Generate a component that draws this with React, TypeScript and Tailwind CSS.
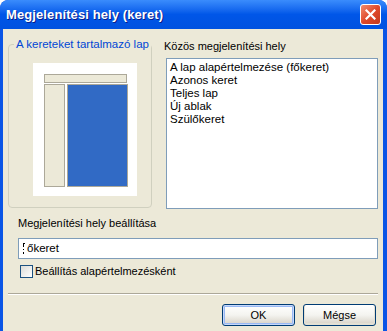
import React from 'react';

const font = { fontFamily: '"Liberation Sans", Arial, sans-serif' };

// Small XP-style push button
const XpButton: React.FC<{ label: string; isDefault?: boolean }> = ({ label, isDefault }) => (
  <button
    className={`w-[73px] h-[22px] rounded-[3px] border border-[#003c74] bg-gradient-to-b from-[#ffffff] via-[#f4f4f0] to-[#d6d0c5] text-[11px] text-black flex items-center justify-center ${
      isDefault ? 'shadow-[inset_0_0_0_1px_#c6d8fa,inset_0_0_0_2px_#98b8f4]' : 'shadow-[inset_0_-1px_0_1px_#e3e0d4]'
    }`}
  >
    {label}
  </button>
);

const targets = ['A lap alapértelmezése (főkeret)', 'Azonos keret', 'Teljes lap', 'Új ablak', 'Szülőkeret'];

const App: React.FC = () => {
  return (
    <div className="w-[387px] h-[331px] overflow-hidden bg-[#0a55e6] rounded-t-[8px] flex flex-col" style={font}>
      {/* Title bar */}
      <div className="h-[29px] shrink-0 flex items-center justify-between pl-[6px] pr-[6px] rounded-t-[8px] bg-gradient-to-b from-[#3a8cfc] via-[#0056e8] to-[#0052e0]">
        <span className="text-white font-bold text-[13px] tracking-[0.1px] [text-shadow:1px_1px_0_#0a1e8a]">
          Megjelenítési hely (keret)
        </span>
        <div className="w-[21px] h-[21px] rounded-[3px] border border-white bg-gradient-to-br from-[#f08a6c] via-[#e0492a] to-[#c4381c] flex items-center justify-center">
          <svg width="11" height="11" viewBox="0 0 11 11">
            <path d="M1.5 1.5 L9.5 9.5 M9.5 1.5 L1.5 9.5" stroke="white" strokeWidth="2.2" strokeLinecap="square" />
          </svg>
        </div>
      </div>

      {/* Body */}
      <div className="flex-1 ml-[3px] mr-[4px] bg-[#ece9d8] flex flex-col px-[5px] pt-[9px] text-[11px] text-black">
        <div className="flex">
          <fieldset className="w-[144px] h-[170px] border border-[#d0d0bf] rounded-[4px] flex flex-col">
            <legend className="ml-[5px] px-[2px] text-[#0046d5] leading-[13px] text-[11.5px]">A kereteket tartalmazó lap</legend>
            <div className="mt-[12px] ml-[24px] w-[104px] h-[133px] bg-white flex flex-col pt-[11px] pl-[11px]">
              <div className="w-[83px] h-[9px] bg-[#ece9d8] border border-[#aca899]" />
              <div className="flex gap-[2px] mt-[1px]">
                <div className="w-[21px] h-[103px] bg-[#ece9d8] border border-[#aca899]" />
                <div className="w-[61px] h-[103px] bg-[#316ac5] border border-[#aca899]" />
              </div>
            </div>
          </fieldset>

          <div className="ml-[12px] flex flex-col">
            <div className="leading-[13px] mt-[2px]">Közös megjelenítési hely</div>
            <div className="mt-[5px] ml-[2px] w-[212px] h-[151px] bg-white border border-[#7f9db9] pl-[3px] pt-[2px] flex flex-col text-[11.5px]">
              {targets.map((t) => (
                <div key={t} className="leading-[13px]">
                  {t}
                </div>
              ))}
            </div>
          </div>
        </div>

        <div className="ml-[10px] mt-[8px] leading-[13px]">Megjelenítési hely beállítása</div>
        <div className="ml-[10px] mt-[8px] w-[360px] h-[21px] bg-white border border-[#7f9db9] flex items-center pl-[3px]">
          <svg width="4" height="12" viewBox="0 0 4 12" className="mr-[1px]">
            <path d="M1 0.5 H3 M1.5 1 V4 M1.5 6 V7 M1.5 9 V11" stroke="black" strokeWidth="1" />
          </svg>
          <span className="leading-[13px] text-[11.5px]">őkeret</span>
        </div>

        <div className="ml-[12px] mt-[6px] flex items-center gap-[2px]">
          <div className="w-[13px] h-[13px] border border-[#1c5180] bg-gradient-to-br from-[#dcdcd7] to-[#ffffff]" />
          <span className="leading-[13px]">Beállítás alapértelmezésként</span>
        </div>

        <div className="mt-[15px] h-[2px] border-t border-[#aca899] border-b border-b-white" />

        <div className="mt-[9px] flex justify-end gap-[8px] pr-[2px]">
          <XpButton label="OK" isDefault />
          <XpButton label="Mégse" />
        </div>
      </div>
    </div>
  );
};

export default App;
